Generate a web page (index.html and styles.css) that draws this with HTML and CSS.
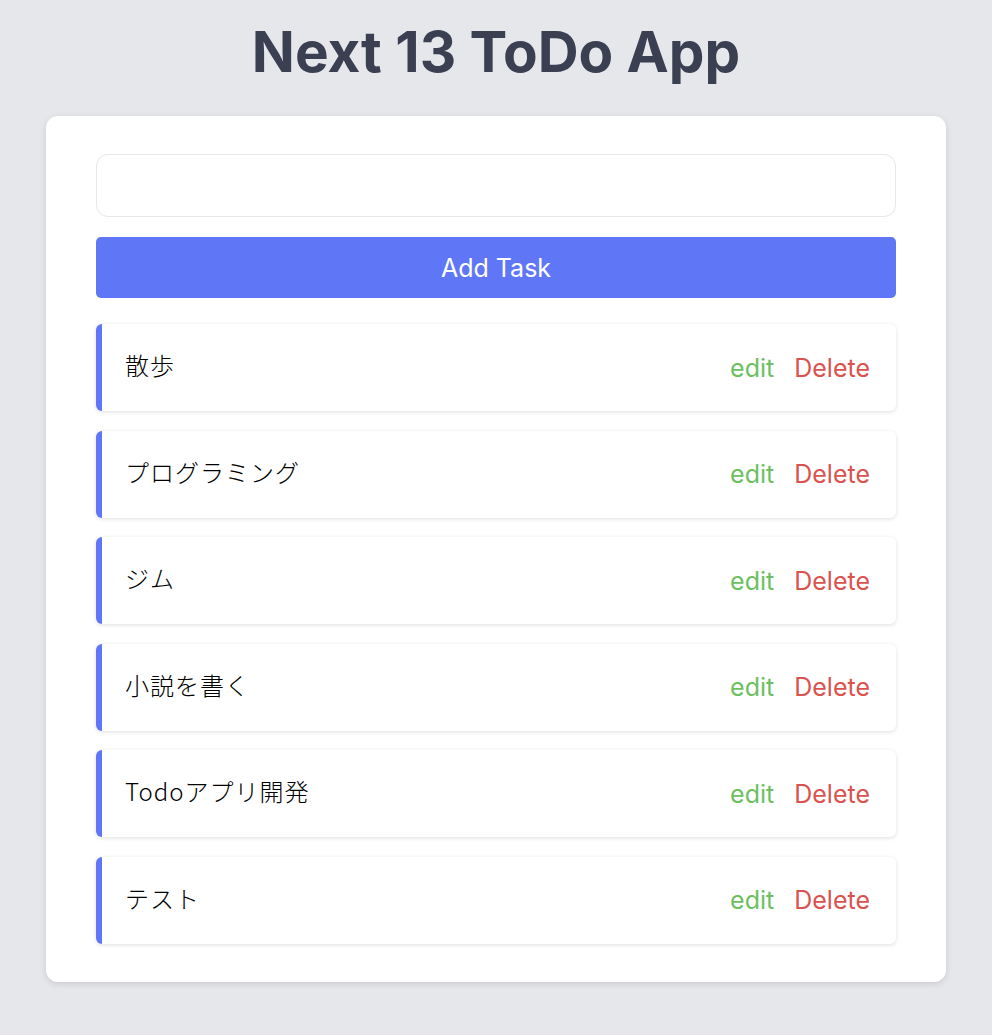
FILE: index.html
```html
<!DOCTYPE html>
<html lang="ja">
<head>
<meta charset="utf-8">
<title>Next 13 ToDo App</title>
<link rel="stylesheet" href="styles.css">
</head>
<body>
<main class="page">
  <h1 class="title">Next 13 ToDo App</h1>
  <section class="card">
    <form class="add-form">
      <input class="task-input" type="text">
      <button class="add-btn" type="button">Add Task</button>
    </form>
    <ul class="list">
      <li class="item"><span class="item-text">散歩</span><span class="actions"><span class="edit">edit</span><span class="delete">Delete</span></span></li>
      <li class="item"><span class="item-text">プログラミング</span><span class="actions"><span class="edit">edit</span><span class="delete">Delete</span></span></li>
      <li class="item"><span class="item-text">ジム</span><span class="actions"><span class="edit">edit</span><span class="delete">Delete</span></span></li>
      <li class="item"><span class="item-text">小説を書く</span><span class="actions"><span class="edit">edit</span><span class="delete">Delete</span></span></li>
      <li class="item"><span class="item-text">Todoアプリ開発</span><span class="actions"><span class="edit">edit</span><span class="delete">Delete</span></span></li>
      <li class="item"><span class="item-text">テスト</span><span class="actions"><span class="edit">edit</span><span class="delete">Delete</span></span></li>
    </ul>
  </section>
</main>
</body>
</html>
```

FILE: styles.css
```css
* { box-sizing: border-box; }
html, body { margin: 0; padding: 0; }
body {
  background: #e5e7eb;
  font-family: Inter, "Noto Sans CJK JP", sans-serif;
  min-height: 1035px;
}
.page {
  display: flex;
  flex-direction: column;
  align-items: center;
  padding-top: 18px;
}
.title {
  margin: 0;
  font-size: 56.6px;
  line-height: 68px;
  font-weight: 700;
  color: #3a3f52;
}
.card {
  margin-top: 30px;
  width: 900px;
  background: #fff;
  border-radius: 12px;
  box-shadow: 0 2px 6px rgba(0,0,0,0.12);
  padding: 38px 50px;
}
.add-form {
  display: flex;
  flex-direction: column;
  gap: 20px;
}
.task-input {
  height: 63px;
  border: 1px solid #e5e7eb;
  border-radius: 12px;
  padding: 0 16px;
  font: inherit;
  font-size: 24px;
  outline: none;
}
.add-btn {
  height: 61px;
  border: none;
  border-radius: 5px;
  background: #5f77f7;
  color: #fff;
  font-family: Inter, sans-serif;
  font-size: 25px;
  cursor: pointer;
}
.list {
  list-style: none;
  margin: 26px 0 0;
  padding: 0;
  display: flex;
  flex-direction: column;
  gap: 19.5px;
}
.item {
  height: 87px;
  display: flex;
  align-items: center;
  justify-content: space-between;
  background: #fff;
  border-left: 6px solid #5f77f7;
  border-radius: 6px;
  box-shadow: 0 1px 4px rgba(0,0,0,0.13);
  padding: 0 26px 0 23px;
}
.item-text {
  font-family: "Noto Sans CJK JP", sans-serif;
  font-size: 24px;
  font-weight: 300;
  line-height: 32px;
  color: #000;
  margin-top: -5px;
  letter-spacing: 1px;
}
.actions {
  display: flex;
  gap: 20px;
  font-family: Inter, sans-serif;
  font-size: 25px;
  line-height: 32px;
}
.edit { color: #6cc05f; }
.delete { color: #d9534f; }
```
